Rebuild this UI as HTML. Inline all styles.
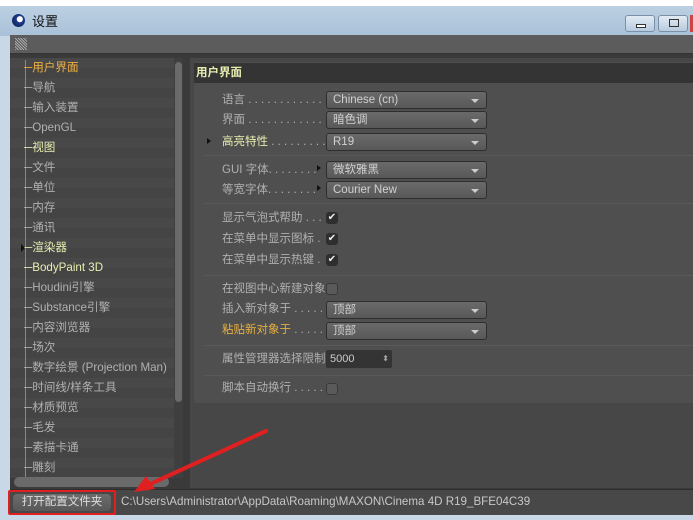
<!DOCTYPE html><html><head><meta charset="utf-8"><style>
*{margin:0;padding:0;box-sizing:border-box}
body{width:693px;height:520px;overflow:hidden;background:#c9d8e6;font-family:"Liberation Sans","Noto Sans CJK SC",sans-serif;font-size:11px;position:relative;line-height:20px}
.a{position:absolute}
.t{color:#b0b0b0;white-space:nowrap;font-size:11.5px;line-height:20px;height:20px}
.dd{position:absolute;left:326px;width:161px;height:18px;border:1px solid #2e2e2e;border-radius:3px;background:linear-gradient(#6a6a6a,#585858);color:#d0d0d0;padding-left:6px;line-height:16px;font-size:11.5px}
.dd:after{content:"";position:absolute;right:7px;top:7px;border-left:4px solid transparent;border-right:4px solid transparent;border-top:4px solid #ccc}
.sep{position:absolute;left:205px;width:488px;height:1px;background:#383838;border-bottom:1px solid #5a5a5a}
.cb{position:absolute;left:326px;width:12px;height:12px;border-radius:3px;background:#2e2e2e;color:#eee;font-size:10px;line-height:12px;text-align:center}
.cb.o{background:#5a5a5a;border:1px solid #3a3a3a}
.li{position:absolute;left:24px;color:#b0b0b0;white-space:nowrap;font-size:11.6px;line-height:20px;height:20px}
</style></head><body>
<div class="a" style="left:0;top:0;width:693px;height:6px;background:#fff"></div>
<div class="a" style="left:0;top:6px;width:693px;height:30px;background:linear-gradient(#bcd0e2,#a9c1d8)"></div>
<div class="a" style="left:12px;top:14px;width:13px;height:13px;border-radius:50%;background:radial-gradient(circle at 60% 40%,#fff 0 25%,#1d3b8c 30%,#0b1a4a)"></div>
<div class="a" style="left:32px;top:12px;font-size:13px;color:#111">设置</div>
<div class="a" style="left:625px;top:15px;width:30px;height:17px;border:1px solid #7890a8;border-radius:3px;background:linear-gradient(#e2ebf4,#b8cade)"><div class="a" style="left:10px;top:8px;width:10px;height:4px;border:1px solid #333;background:#fff"></div></div>
<div class="a" style="left:658px;top:15px;width:30px;height:17px;border:1px solid #7890a8;border-radius:3px;background:linear-gradient(#e2ebf4,#b8cade)"><div class="a" style="left:10px;top:3px;width:10px;height:8px;border:1px solid #333"></div></div>
<div class="a" style="left:690px;top:15px;width:3px;height:17px;background:#c44"></div>
<div class="a" style="left:10px;top:35px;width:683px;height:19px;background:#5c5c5c;border-bottom:1px solid #333"></div>
<div class="a" style="left:15px;top:38px;width:12px;height:12px;background:repeating-linear-gradient(45deg,#aaa 0 1px,#555 1px 2px)"></div>
<div class="a" style="left:10px;top:54px;width:683px;height:436px;background:#3a3a3a"></div>
<div class="a" style="left:10px;top:58px;width:165px;height:420px;background:repeating-linear-gradient(#484848 0 10px,#444 10px 20px)"></div>
<div class="a" style="left:25px;top:60px;width:1px;height:418px;background:#888"></div>
<div class="a" style="left:174px;top:58px;width:9px;height:420px;background:#3f3f3f"></div>
<div class="a" style="left:175px;top:62px;width:7px;height:340px;border-radius:4px;background:#6a6a6a"></div>
<div class="a" style="left:14px;top:477px;width:155px;height:10px;border-radius:5px;background:#6a6a6a"></div>
<div class="li" style="top:58px;color:#f0b040">─用户界面</div>
<div class="li" style="top:78px">─导航</div>
<div class="li" style="top:98px">─输入装置</div>
<div class="li" style="top:118px">─OpenGL</div>
<div class="li" style="top:138px;color:#e8eeb0">─视图</div>
<div class="li" style="top:158px">─文件</div>
<div class="li" style="top:178px">─单位</div>
<div class="li" style="top:198px">─内存</div>
<div class="li" style="top:218px">─通讯</div>
<div class="li" style="top:238px;color:#e8eeb0">─渲染器</div>
<div class="a" style="left:21px;top:244px;border-top:4px solid transparent;border-bottom:4px solid transparent;border-left:4px solid #111"></div>
<div class="li" style="top:258px;color:#e8eeb0">─BodyPaint 3D</div>
<div class="li" style="top:278px">─Houdini引擎</div>
<div class="li" style="top:298px">─Substance引擎</div>
<div class="li" style="top:318px">─内容浏览器</div>
<div class="li" style="top:338px">─场次</div>
<div class="li" style="top:358px">─数字绘景 (Projection Man)</div>
<div class="li" style="top:378px">─时间线/样条工具</div>
<div class="li" style="top:398px">─材质预览</div>
<div class="li" style="top:418px">─毛发</div>
<div class="li" style="top:438px">─素描卡通</div>
<div class="li" style="top:458px">─雕刻</div>
<div class="a" style="left:190px;top:58px;width:503px;height:430px;background:#474747"></div>
<div class="a" style="left:194px;top:62px;width:499px;height:341px;background:#4f4f4f"></div>
<div class="a" style="left:194px;top:63px;width:499px;height:20px;background:#343434"></div>
<div class="a" style="left:196px;top:63px;color:#e8eeb0;font-weight:bold;font-size:11.5px;line-height:20px">用户界面</div>
<div class="a t" style="left:222px;top:90px">语言 . . . . . . . . . . . .</div><div class="dd" style="top:91px">Chinese (cn)</div>
<div class="a t" style="left:222px;top:110px">界面 . . . . . . . . . . . .</div><div class="dd" style="top:111px">暗色调</div>
<div class="a" style="left:207px;top:138px;border-top:3px solid transparent;border-bottom:3px solid transparent;border-left:4px solid #111"></div>
<div class="a t" style="left:222px;top:132px;color:#e8eeb0">高亮特性<span style="color:#b0b0b0"> . . . . . . . . .</span></div><div class="dd" style="top:133px">R19</div>
<div class="sep" style="top:155px"></div>
<div class="a t" style="left:222px;top:160px">GUI 字体. . . . . . . .</div><div class="a" style="left:317px;top:165px;border-top:3px solid transparent;border-bottom:3px solid transparent;border-left:4px solid #111"></div><div class="dd" style="top:161px">微软雅黑</div>
<div class="a t" style="left:222px;top:180px">等宽字体. . . . . . . .</div><div class="a" style="left:317px;top:185px;border-top:3px solid transparent;border-bottom:3px solid transparent;border-left:4px solid #111"></div><div class="dd" style="top:181px">Courier New</div>
<div class="sep" style="top:203px"></div>
<div class="a t" style="left:222px;top:208px">显示气泡式帮助 . . .</div><div class="cb" style="top:212px">✔</div>
<div class="a t" style="left:222px;top:229px">在菜单中显示图标 .</div><div class="cb" style="top:233px">✔</div>
<div class="a t" style="left:222px;top:250px">在菜单中显示热键 .</div><div class="cb" style="top:254px">✔</div>
<div class="sep" style="top:275px"></div>
<div class="a t" style="left:222px;top:279px">在视图中心新建对象</div><div class="cb o" style="top:283px"></div>
<div class="a t" style="left:222px;top:299px">插入新对象于 . . . . .</div><div class="dd" style="top:301px">顶部</div>
<div class="a t" style="left:222px;top:320px;color:#e8b040">粘贴新对象于<span style="color:#b0b0b0"> . . . . .</span></div><div class="dd" style="top:322px">顶部</div>
<div class="sep" style="top:345px"></div>
<div class="a t" style="left:222px;top:349px">属性管理器选择限制</div>
<div class="a" style="left:326px;top:350px;width:66px;height:18px;background:#343434;border-radius:2px;color:#ccc;padding-left:4px;line-height:18px">5000<span style="position:absolute;right:3px;font-size:8px;color:#aaa">⬍</span></div>
<div class="sep" style="top:375px"></div>
<div class="a t" style="left:222px;top:378px">脚本自动换行 . . . . .</div><div class="cb o" style="top:383px"></div>
<div class="a" style="left:10px;top:489px;width:683px;height:26px;background:#484848;border-top:1px solid #2e2e2e"></div>
<div class="a" style="left:8px;top:490px;width:108px;height:25px;border:2px solid #e02020;border-radius:2px"></div>
<div class="a" style="left:13px;top:494px;width:98px;height:17px;border-radius:4px;background:linear-gradient(#6c6c6c,#585858);color:#ddd;text-align:center;line-height:17px;font-size:11.5px">打开配置文件夹</div>
<div class="a t" style="left:121px;top:492px;color:#c8c8c8;font-size:11.6px">C:\Users\Administrator\AppData\Roaming\MAXON\Cinema 4D R19_BFE04C39</div>
<svg class="a" style="left:0;top:0" width="693" height="520"><path d="M266 431 L148 485" stroke="#e02020" stroke-width="4" stroke-linecap="round"/><path d="M134 492 L146 476 L155 489 Z" fill="#e02020"/></svg>
</body></html>
